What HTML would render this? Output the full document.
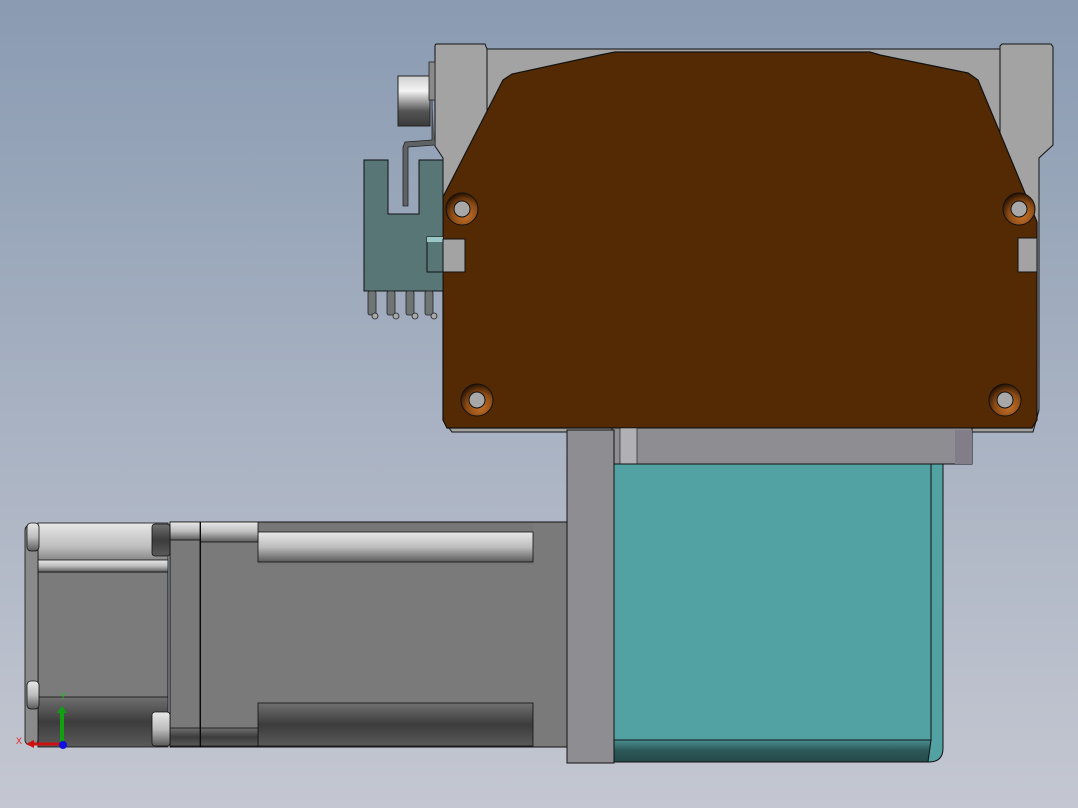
<!DOCTYPE html>
<html><head><meta charset="utf-8"><style>
html,body{margin:0;padding:0;width:1078px;height:808px;overflow:hidden}
svg{display:block}
</style></head><body>
<svg width="1078" height="808" viewBox="0 0 1078 808" xmlns="http://www.w3.org/2000/svg">
<defs>
<linearGradient id="bg" x1="0" y1="0" x2="0" y2="1"><stop offset="0" stop-color="#8a9bb2"/><stop offset="1" stop-color="#c4c7d1"/></linearGradient>
<linearGradient id="rod" x1="0" y1="0" x2="0" y2="1"><stop offset="0" stop-color="#e8e8e8"/><stop offset=".5" stop-color="#bdbdbd"/><stop offset="1" stop-color="#5a5a5a"/></linearGradient>
<linearGradient id="rodd" x1="0" y1="0" x2="0" y2="1"><stop offset="0" stop-color="#707070"/><stop offset=".5" stop-color="#3c3c3c"/><stop offset="1" stop-color="#5a5a5a"/></linearGradient>
<linearGradient id="roll" x1="0" y1="0" x2="0" y2="1"><stop offset="0" stop-color="#cfcfcf"/><stop offset=".3" stop-color="#f4f4f4"/><stop offset=".7" stop-color="#555"/><stop offset="1" stop-color="#3a3a3a"/></linearGradient>
<linearGradient id="tealb" x1="0" y1="0" x2="0" y2="1"><stop offset="0" stop-color="#4a8e8f"/><stop offset=".5" stop-color="#2b5657"/><stop offset="1" stop-color="#254a4b"/></linearGradient>
<radialGradient id="cop" cx=".6" cy=".7" r=".7"><stop offset="0" stop-color="#c8732a"/><stop offset=".6" stop-color="#8a4a15"/><stop offset="1" stop-color="#2a1300"/></radialGradient>
</defs>
<rect width="1078" height="808" fill="url(#bg)"/>

<!-- gray frame -->
<path d="M435,46 Q435,44 437,44 L485,44 L487,49 L1000,49 L1000,46 L1002,44 L1051,44 L1053,47 L1053,145 L1039,158 L1039,410 L1033,432 L452,432 L443,420 L443,158 L435,146 Z" fill="#a3a3a3" stroke="#111" stroke-width="1"/>
<path d="M487,49 L487,140 M1000,49 L1000,140" stroke="#111" stroke-width="1"/>

<!-- brown board -->
<path d="M443,197 L503,80 L512,74 L600,55 L615,52 L870,52 L880,55 L968,73 L978,80 L1037,222 L1037,420 L1032,428 L447,428 L443,420 Z" fill="#532a04" stroke="#111" stroke-width="1.2"/>

<!-- holes -->
<g stroke="#111" stroke-width="1">
<circle cx="462" cy="209" r="16" fill="url(#cop)"/><circle cx="462" cy="209" r="8" fill="#a8a8a8"/>
<circle cx="1019" cy="209" r="16" fill="url(#cop)"/><circle cx="1019" cy="209" r="8" fill="#a8a8a8"/>
<circle cx="477" cy="400" r="16" fill="url(#cop)"/><circle cx="477" cy="400" r="8" fill="#a8a8a8"/>
<circle cx="1005" cy="400" r="16" fill="url(#cop)"/><circle cx="1005" cy="400" r="8" fill="#a8a8a8"/>
</g>

<!-- roller + bracket -->
<rect x="398" y="76" width="32" height="50" fill="url(#roll)" stroke="#222" stroke-width="1"/>
<rect x="429" y="62" width="6" height="38" fill="#8a8a8a" stroke="#222" stroke-width=".8"/>
<path d="M432,100 L432,140 L405,142 L403,147 L403,206 L408,206 L408,147 L435,145" fill="#606366" stroke="#222" stroke-width=".8"/>

<!-- teal sensor -->
<path d="M364,160 L388,160 L388,214 L419,214 L419,160 L443,160 L443,291 L364,291 Z" fill="#587676" stroke="#111" stroke-width="1"/>
<g fill="#6f7575" stroke="#222" stroke-width=".8">
<rect x="368" y="291" width="8" height="24" rx="2"/><rect x="387" y="291" width="8" height="24" rx="2"/><rect x="406" y="291" width="8" height="24" rx="2"/><rect x="425" y="291" width="8" height="24" rx="2"/>
</g>
<g fill="#a8a8a8" stroke="#222" stroke-width=".8"><circle cx="375" cy="316" r="3"/><circle cx="396" cy="316" r="3"/><circle cx="415" cy="316" r="3"/><circle cx="434" cy="316" r="3"/></g>
<rect x="427" y="237" width="16" height="35" fill="#587676" stroke="#111" stroke-width="1"/>
<rect x="427" y="237" width="16" height="5" fill="#9cc7c7"/>
<rect x="443" y="239" width="22" height="33" fill="#a3a3a3" stroke="#111" stroke-width="1"/>
<path d="M1018,238 L1037,238 L1037,272 L1018,272 Z" fill="#a3a3a3" stroke="#111" stroke-width="1"/>

<!-- lower gray strip -->
<rect x="612" y="428" width="360" height="36" fill="#8e8d92" stroke="#111" stroke-width="1"/>
<rect x="620" y="428" width="17" height="36" fill="#b0b0b5" stroke="#111" stroke-width=".6"/>
<rect x="955" y="430" width="17" height="34" fill="#837d8a"/>

<!-- teal block -->
<path d="M614,464 L943,464 L943,748 Q943,762 929,762 L614,762 Z" fill="#52a2a3" stroke="#111" stroke-width="1"/>
<line x1="931" y1="464" x2="931" y2="740" stroke="#111" stroke-width="1"/>
<path d="M614,740 L931,740 L928,762 L614,762 Z" fill="url(#tealb)" stroke="#111" stroke-width="1"/>

<!-- vertical plate -->
<rect x="567" y="430" width="47" height="333" fill="#8e8d92" stroke="#111" stroke-width="1"/>

<!-- motor -->
<rect x="200" y="522" width="367" height="225" fill="#7a7a7a" stroke="#111" stroke-width="1"/>
<rect x="258" y="523" width="275" height="42" fill="#777"/>
<rect x="258" y="532" width="275" height="30" fill="url(#rod)" stroke="#111" stroke-width=".8"/>
<rect x="258" y="703" width="275" height="43" fill="url(#rodd)" stroke="#111" stroke-width=".8"/>
<rect x="200" y="522" width="58" height="20" fill="url(#rod)" stroke="#111" stroke-width=".8"/>
<rect x="200" y="728" width="58" height="18" fill="url(#rodd)" stroke="#111" stroke-width=".8"/>
<line x1="200" y1="522" x2="200" y2="747" stroke="#000" stroke-width="2"/>
<rect x="170" y="522" width="30" height="225" fill="#7a7a7a" stroke="#111" stroke-width="1"/>
<rect x="170" y="522" width="30" height="18" fill="url(#rod)" stroke="#111" stroke-width=".8"/>
<rect x="170" y="728" width="30" height="18" fill="url(#rodd)" stroke="#111" stroke-width=".8"/>
<rect x="38" y="572" width="130" height="165" fill="#7b7b7b" stroke="#111" stroke-width="1"/>
<rect x="38" y="523" width="130" height="48" fill="url(#rod)" stroke="#111" stroke-width=".8"/>
<rect x="38" y="560" width="130" height="12" fill="url(#rod)" stroke="#111" stroke-width=".8"/>
<rect x="38" y="697" width="130" height="50" fill="url(#rodd)" stroke="#111" stroke-width=".8"/>
<rect x="152" y="524" width="18" height="32" rx="3" fill="url(#rodd)" stroke="#111" stroke-width=".8"/>
<rect x="152" y="712" width="18" height="34" rx="3" fill="url(#rod)" stroke="#111" stroke-width=".8"/>
<rect x="25" y="525" width="13" height="220" rx="5" fill="#8a8a8a" stroke="#111" stroke-width=".8"/>
<rect x="27" y="523" width="12" height="28" rx="4" fill="url(#rod)" stroke="#111" stroke-width=".8"/>
<rect x="27" y="681" width="12" height="28" rx="4" fill="url(#rod)" stroke="#111" stroke-width=".8"/>

<!-- axes -->
<line x1="62" y1="744" x2="32" y2="744" stroke="#d01010" stroke-width="3"/>
<path d="M26,744 L34,740 L34,748 Z" fill="#d01010"/>
<line x1="62" y1="744" x2="62" y2="712" stroke="#10a010" stroke-width="4"/>
<path d="M62,706 L57,713 L67,713 Z" fill="#10a010"/>
<circle cx="63" cy="745" r="4" fill="#1010e0"/>
<text x="60" y="699" font-family="Liberation Sans, sans-serif" font-size="9" fill="#20c020">Y</text>
<text x="16" y="744" font-family="Liberation Sans, sans-serif" font-size="9" fill="#e02020">X</text>
</svg>
</body></html>
